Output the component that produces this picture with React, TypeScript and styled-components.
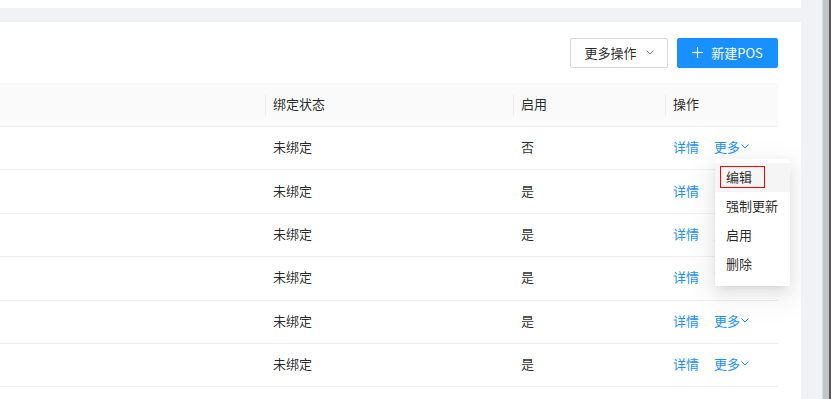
import React from 'react';
import styled, { createGlobalStyle } from 'styled-components';

const GlobalStyle = createGlobalStyle`
  html, body {
    margin: 0;
    padding: 0;
    height: 100%;
    overflow: hidden;
    background: #f0f2f5;
  }
  body {
    font-family: "Noto Sans CJK SC", "Noto Sans", sans-serif;
    font-size: 13px;
    color: rgba(0, 0, 0, 0.85);
  }
`;

const Screen = styled.div`
  display: flex;
  height: 399px;
  width: 831px;
`;

const Main = styled.div`
  width: 801px;
  display: flex;
  flex-direction: column;
  gap: 14px;
`;

const Gutter = styled.div`
  width: 21px;
  background: #f0f2f5;
`;

const WindowEdge = styled.div`
  width: 6px;
  background: #c4c4c6;
  border-left: 1px solid #dcdcde;
  border-right: 2px solid #58585a;
`;

const TopCard = styled.div`
  height: 8px;
  background: #fff;
`;

const Card = styled.div`
  flex: 1;
  background: #fff;
  padding: 16px 23px 0 0;
  overflow: hidden;
`;

const Toolbar = styled.div`
  display: flex;
  justify-content: flex-end;
  gap: 9px;
  margin-bottom: 15px;
`;

const Button = styled.button<{ $primary?: boolean; $width: number }>`
  width: ${p => p.$width}px;
  height: 30px;
  display: flex;
  align-items: center;
  justify-content: center;
  gap: ${p => (p.$primary ? 8 : 9)}px;
  padding: 0 0 2px;
  font-family: inherit;
  font-size: 13px;
  border-radius: 2px;
  border: 1px solid ${p => (p.$primary ? '#1890ff' : '#d9d9d9')};
  background: ${p => (p.$primary ? '#1890ff' : '#fff')};
  color: ${p => (p.$primary ? '#fff' : 'rgba(0,0,0,0.85)')};
  cursor: pointer;
`;

const Table = styled.div`
  width: 778px;
`;

const Row = styled.div<{ $head?: boolean }>`
  display: grid;
  grid-template-columns: 265px 248px 152px 113px;
  height: ${p => (p.$head ? 44 : 43.4)}px;
  box-sizing: border-box;
  border-bottom: 1px solid #f0f0f0;
  background: ${p => (p.$head ? '#fafafa' : '#fff')};
`;

const Cell = styled.div<{ $divider?: boolean }>`
  position: relative;
  display: flex;
  align-items: center;
  padding: 0 0 3px 8px;
  &::before {
    content: '';
    display: ${p => (p.$divider ? 'block' : 'none')};
    position: absolute;
    left: 0;
    top: 50%;
    width: 1px;
    height: 21px;
    transform: translateY(-50%);
    background: rgba(0, 0, 0, 0.06);
  }
`;

const Actions = styled(Cell)`
  gap: 15px;
`;

const Link = styled.a`
  color: #1890ff;
  text-decoration: none;
  display: inline-flex;
  align-items: center;
  gap: 1px;
  cursor: pointer;
`;

const Menu = styled.ul`
  position: absolute;
  z-index: 10;
  top: 32px;
  left: 50px;
  width: 75px;
  margin: 0;
  padding: 4px 0 7px;
  list-style: none;
  background: #fff;
  border-radius: 2px;
  box-shadow: 0 3px 6px -4px rgba(0, 0, 0, 0.12), 0 6px 16px 0 rgba(0, 0, 0, 0.08),
    0 9px 28px 8px rgba(0, 0, 0, 0.05);
`;

const MenuItem = styled.li<{ $active?: boolean }>`
  position: relative;
  height: 29px;
  line-height: 28px;
  padding: 0 11px;
  white-space: nowrap;
  background: ${p => (p.$active ? '#f5f5f5' : 'transparent')};
  &::after {
    content: '';
    display: ${p => (p.$active ? 'block' : 'none')};
    position: absolute;
    left: 5px;
    top: 3px;
    width: 45px;
    height: 22px;
    box-sizing: border-box;
    border: 1px solid #f00;
  }
`;

const Chevron = () => (
  <svg width="8" height="5" viewBox="0 0 8 5" fill="none">
    <polyline points="0.5,0.5 4,4 7.5,0.5" stroke="currentColor" strokeWidth="1" />
  </svg>
);

const Plus = () => (
  <svg width="11" height="11" viewBox="0 0 11 11" fill="none">
    <line x1="5.5" y1="0" x2="5.5" y2="11" stroke="#fff" strokeWidth="1.1" />
    <line x1="0" y1="5.5" x2="11" y2="5.5" stroke="#fff" strokeWidth="1.1" />
  </svg>
);

const Muted = styled.span`
  display: flex;
  color: rgba(0, 0, 0, 0.45);
`;

const rows = ['否', '是', '是', '是', '是', '是'];

const App = () => {
  return (
    <Screen>
      <GlobalStyle />
      <Main>
        <TopCard />
        <Card>
          <Toolbar>
            <Button $width={98}>
              更多操作
              <Muted>
                <Chevron />
              </Muted>
            </Button>
            <Button $primary $width={101}>
              <Plus />
              新建POS
            </Button>
          </Toolbar>
          <Table>
            <Row $head>
              <Cell />
              <Cell $divider>绑定状态</Cell>
              <Cell $divider>启用</Cell>
              <Cell $divider>操作</Cell>
            </Row>
            {rows.map((enabled, i) => (
              <Row key={i}>
                <Cell />
                <Cell>未绑定</Cell>
                <Cell>{enabled}</Cell>
                <Actions>
                  <Link>详情</Link>
                  <Link>
                    更多
                    <Chevron />
                  </Link>
                  {i === 0 && (
                    <Menu>
                      <MenuItem $active>编辑</MenuItem>
                      <MenuItem>强制更新</MenuItem>
                      <MenuItem>启用</MenuItem>
                      <MenuItem>删除</MenuItem>
                    </Menu>
                  )}
                </Actions>
              </Row>
            ))}
          </Table>
        </Card>
      </Main>
      <Gutter />
      <WindowEdge />
    </Screen>
  );
};

export default App;
